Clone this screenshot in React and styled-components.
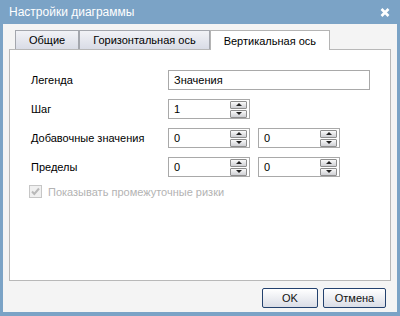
import React from "react";
import styled, { createGlobalStyle } from "styled-components";

const GlobalStyle = createGlobalStyle`
  body {
    margin: 0;
    font-family: "Liberation Sans", Arial, sans-serif;
  }
`;

function Spinner({ value, width }) {
  return (
    <SpinBox $width={width}>
      <span>{value}</span>
      <SpinButtons>
        <SpinBtn>
          <Arrow $up />
        </SpinBtn>
        <SpinBtn>
          <Arrow />
        </SpinBtn>
      </SpinButtons>
    </SpinBox>
  );
}

function App() {
  return (
    <>
      <GlobalStyle />
      <Window>
        <TitleBar>
          <span>Настройки диаграммы</span>
          <CloseBtn>
            <svg width="10" height="9" viewBox="0 0 10 9">
              <path d="M1.5 1 L8.5 8 M8.5 1 L1.5 8" stroke="#fff" strokeWidth="2.6" />
            </svg>
          </CloseBtn>
        </TitleBar>
        <Content>
          <TabRow>
            <Tab>Общие</Tab>
            <Tab>Горизонтальная ось</Tab>
            <Tab $active>Вертикальная ось</Tab>
          </TabRow>
          <Panel>
            <Row>
              <Label>Легенда</Label>
              <TextInput>Значения</TextInput>
            </Row>
            <Row>
              <Label>Шаг</Label>
              <Spinner value="1" />
            </Row>
            <Row>
              <Label>Добавочные значения</Label>
              <Spinner value="0" />
              <Spinner value="0" />
            </Row>
            <Row>
              <Label>Пределы</Label>
              <Spinner value="0" />
              <Spinner value="0" />
            </Row>
            <CheckRow>
              <CheckBox>
                <svg width="11" height="11" viewBox="0 0 11 11">
                  <path d="M2 5.5 L4.3 8 L9 2.5" fill="none" stroke="#b9b9b9" strokeWidth="2" />
                </svg>
              </CheckBox>
              <DisabledText>Показывать промежуточные ризки</DisabledText>
            </CheckRow>
          </Panel>
          <Footer>
            <Button $width={56}>OK</Button>
            <Button $width={63}>Отмена</Button>
          </Footer>
        </Content>
      </Window>
    </>
  );
}

const Window = styled.div`
  width: 400px;
  height: 316px;
  box-sizing: border-box;
  background: #7ba3c6;
  padding: 0 3px 4px 3px;
  display: flex;
  flex-direction: column;
`;

const TitleBar = styled.div`
  height: 24px;
  display: flex;
  align-items: center;
  justify-content: space-between;
  padding: 0 7px 0 6px;
  color: #fff;
  font-size: 12px;
`;

const CloseBtn = styled.div`
  display: flex;
  align-items: center;
`;

const Content = styled.div`
  flex: 1;
  background: #f4f4f4;
  display: flex;
  flex-direction: column;
  padding: 6px 6px 0 6px;
`;

const TabRow = styled.div`
  display: flex;
  padding-left: 6px;
  height: 19px;
  position: relative;
  z-index: 1;
`;

const Tab = styled.div`
  height: ${({ $active }) => ($active ? "20px" : "19px")};
  box-sizing: border-box;
  padding: 0 13px;
  display: flex;
  align-items: center;
  font-size: 11px;
  color: #000;
  border: 1px solid ${({ $active }) => ($active ? "#b4b4b4" : "#a3a6ad")};
  border-bottom: none;
  background: ${({ $active }) =>
    $active ? "#fff" : "linear-gradient(#f1f2f6, #d9dce6)"};
`;

const Panel = styled.div`
  flex: 1;
  background: #fff;
  border: 1px solid #b8b8b8;
  padding: 20px 0 0 21px;
  display: flex;
  flex-direction: column;
  gap: 9px;
`;

const Row = styled.div`
  display: flex;
  align-items: center;
  gap: 8px;
  height: 20px;
`;

const Label = styled.div`
  width: 129px;
  font-size: 11px;
  color: #000;
`;

const TextInput = styled.div`
  width: 202px;
  height: 20px;
  box-sizing: border-box;
  border: 1px solid #a9a9a9;
  display: flex;
  align-items: center;
  padding-left: 5px;
  font-size: 11px;
`;

const SpinBox = styled.div`
  width: ${({ $width }) => $width || 82}px;
  height: 20px;
  box-sizing: border-box;
  border: 1px solid #a9a9a9;
  display: flex;
  align-items: center;
  padding: 0 2px 0 5px;
  font-size: 11px;
  color: #000;
`;

const SpinButtons = styled.div`
  margin-left: auto;
  display: flex;
  flex-direction: column;
  gap: 1px;
`;

const SpinBtn = styled.div`
  width: 17px;
  height: 8px;
  box-sizing: border-box;
  border: 1px solid #8e8e8e;
  border-radius: 1px;
  background: linear-gradient(#fafafa, #cfd0d4);
  display: flex;
  align-items: center;
  justify-content: center;
`;

const Arrow = styled.div`
  width: 0;
  height: 0;
  border-left: 3px solid transparent;
  border-right: 3px solid transparent;
  ${({ $up }) =>
    $up ? "border-bottom: 3px solid #222;" : "border-top: 3px solid #222;"}
`;

const CheckRow = styled.div`
  display: flex;
  align-items: center;
  gap: 6px;
  margin-left: -2px;
  margin-top: -1px;
`;

const CheckBox = styled.div`
  width: 13px;
  height: 13px;
  box-sizing: border-box;
  border: 1px solid #c6c6c6;
  background: #f0f0f0;
  display: flex;
  align-items: center;
  justify-content: center;
`;

const DisabledText = styled.span`
  font-size: 11px;
  color: #b3b3b3;
`;

const Footer = styled.div`
  display: flex;
  justify-content: flex-end;
  gap: 5px;
  padding: 7px 5px 4px 0;
`;

const Button = styled.div`
  width: ${({ $width }) => $width}px;
  height: 20px;
  box-sizing: border-box;
  border: 1px solid #23416e;
  border-radius: 2px;
  background: linear-gradient(#ffffff, #dadde6);
  display: flex;
  align-items: center;
  justify-content: center;
  font-size: 11px;
  font-weight: normal;
  color: #111;
`;

export default App;
